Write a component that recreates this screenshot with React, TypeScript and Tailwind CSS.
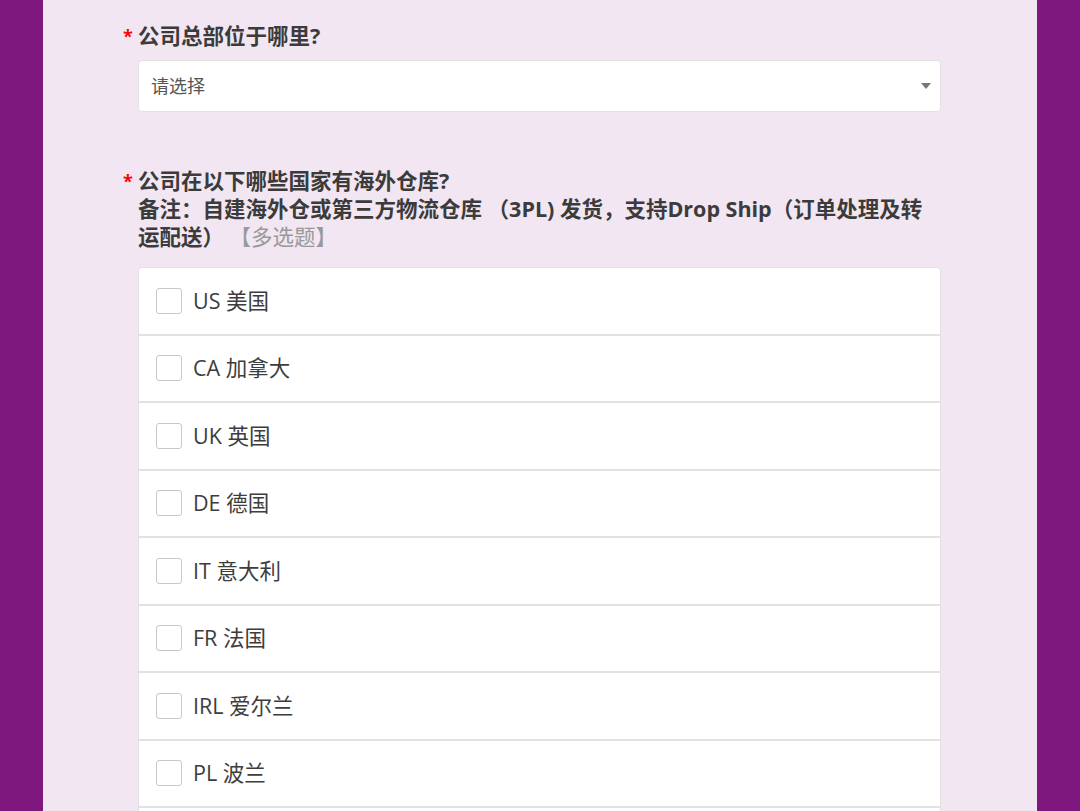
import React from "react";

const options = [
  "US 美国",
  "CA 加拿大",
  "UK 英国",
  "DE 德国",
  "IT 意大利",
  "FR 法国",
  "IRL 爱尔兰",
  "PL 波兰",
  "ES 西班牙",
];

export default function App() {
  return (
    <div
      className="w-[1080px] h-[811px] overflow-hidden bg-[#7f187e] flex"
      style={{ fontFamily: '"Open Sans", "Noto Sans CJK SC", sans-serif' }}
    >
      <div className="ml-[43px] w-[994px] h-full bg-[#f1e6f1] pl-[95px] pr-[96px] pt-[22px]">
        <div className="relative text-[21.5px] leading-[28px] font-bold text-[#3b3b3b]">
          <span className="absolute -left-[15px] top-0 text-[#f00] text-[18px] font-bold">*</span>
          公司总部位于哪里?
        </div>
        <div className="mt-[10px] h-[52px] bg-white border border-[#e2e2e2] rounded-[4px] flex items-center justify-between pl-[12px] pr-[9px]">
          <span className="text-[18px] text-[#555]">请选择</span>
          <svg width="10" height="6" viewBox="0 0 10 6">
            <path d="M0 0 L10 0 L5 6 Z" fill="#777" />
          </svg>
        </div>

        <div className="relative mt-[55px] text-[21.5px] leading-[28px] font-bold text-[#3b3b3b]">
          <span className="absolute -left-[15px] top-0 text-[#f00] text-[18px] font-bold">*</span>
          <div>公司在以下哪些国家有海外仓库?</div>
          <div>
            备注：自建海外仓或第三方物流仓库 （3PL) 发货，支持Drop Ship（订单处理及转运配送）{" "}
            <span className="font-normal text-[#999]">【多选题】</span>
          </div>
        </div>

        <div className="mt-[16px] bg-white border border-[#e2e2e2] rounded-[4px]">
          {options.map((o) => (
            <label
              key={o}
              className="flex items-center h-[67.5px] pl-[17px] border-b-2 border-[#e2e2e2]"
            >
              <span className="w-[26px] h-[26px] border border-[#c8c8c8] rounded-[3px] bg-white shrink-0" />
              <span className="ml-[11px] text-[21.5px] text-[#3d3d3d]">{o}</span>
            </label>
          ))}
        </div>
      </div>
    </div>
  );
}
